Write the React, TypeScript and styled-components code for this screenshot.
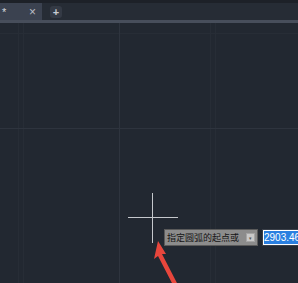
import * as React from "react";
import styled, { createGlobalStyle } from "styled-components";

const GlobalStyle = createGlobalStyle`
  html, body {
    margin: 0;
    padding: 0;
    background: #222831;
    overflow: hidden;
  }
  #root {
    width: 298px;
    height: 283px;
  }
`;

const Page = styled.div`
  display: flex;
  flex-direction: column;
  width: 298px;
  height: 283px;
  background: #222831;
  font-family: "Liberation Sans", "Noto Sans CJK SC", sans-serif;
`;

const TopStrip = styled.div`
  height: 3px;
  background: #1d2128;
`;

const TabBar = styled.div`
  display: flex;
  align-items: stretch;
  height: 17px;
  background: #262c35;
`;

const Tab = styled.div`
  display: flex;
  align-items: center;
  justify-content: space-between;
  width: 42px;
  padding: 0 6px 0 2px;
  box-sizing: border-box;
  background: #3b4250;
  color: #d4d7dc;
  font-size: 11px;
`;

const TabClose = styled.span`
  font-size: 12px;
  color: #b9bdc4;
`;

const AddButton = styled.div`
  display: flex;
  align-items: center;
  justify-content: center;
  width: 12px;
  height: 12px;
  margin: 3px 0 0 8px;
  border-radius: 3px;
  background: #343a45;
  color: #c9ccd2;
  font-size: 11px;
  font-weight: bold;
`;

const Divider = styled.div`
  height: 3px;
  background: #474e5b;
`;

const Canvas = styled.div`
  position: relative;
  flex: 1;
  overflow: hidden;
  background: #222831;
`;

const Drawing = styled.svg`
  position: absolute;
  inset: 0;
`;

const Prompt = styled.div`
  position: absolute;
  left: 164px;
  top: 206px;
  display: flex;
  align-items: center;
  gap: 4px;
`;

const PromptBox = styled.div`
  display: flex;
  align-items: center;
  justify-content: space-between;
  width: 94px;
  height: 17px;
  box-sizing: border-box;
  padding: 0 2px;
  background: #8c8c8c;
  border: 1px solid #5a5a5a;
  color: #141414;
  font-size: 9px;
  white-space: nowrap;
`;

const PromptIcon = styled.span`
  display: flex;
  align-items: flex-end;
  justify-content: center;
  width: 7px;
  height: 7px;
  background: #c9c9c9;
  border: 1px solid #a5a5a5;
  font-size: 5px;
  color: #555;
`;

const ValueBox = styled.div`
  display: flex;
  align-items: center;
  width: 36px;
  height: 17px;
  box-sizing: border-box;
  padding: 1px 0 1px 1px;
  overflow: hidden;
  background: #ffffff;
  border: 1px solid #3a3f48;
  border-right: none;
`;

const Selected = styled.span`
  background: #2a7fe0;
  color: #ffffff;
  font-size: 10px;
  line-height: 13px;
  white-space: nowrap;
`;

export default function App() {
  return (
    <>
      <GlobalStyle />
      <Page>
        <TopStrip />
        <TabBar>
          <Tab>
            <span>*</span>
            <TabClose>×</TabClose>
          </Tab>
          <AddButton>+</AddButton>
        </TabBar>
        <Divider />
        <Canvas>
          <Drawing width="298" height="260" viewBox="0 0 298 260">
            {/* minor grid */}
            <g stroke="#272d36" strokeWidth="1">
              <line x1="18.5" y1="0" x2="18.5" y2="260" />
              <line x1="23.5" y1="0" x2="23.5" y2="260" />
              <line x1="210.5" y1="0" x2="210.5" y2="260" />
              <line x1="215.5" y1="0" x2="215.5" y2="260" />
              <line x1="0" y1="10.5" x2="298" y2="10.5" />
            </g>
            {/* major grid */}
            <g stroke="#2e343e" strokeWidth="1">
              <line x1="119.5" y1="0" x2="119.5" y2="260" />
              <line x1="0" y1="105.5" x2="298" y2="105.5" />
            </g>
            {/* crosshair */}
            <g stroke="#c5c8cc" strokeWidth="1">
              <line x1="152.5" y1="170" x2="152.5" y2="220" />
              <line x1="128" y1="194.5" x2="178" y2="194.5" />
            </g>
            {/* red arrow */}
            <g fill="#e8463c">
              <path d="M158 218 L166 231 L162 231 L178 262 L173 262 L158 233 L154 236 Z" />
            </g>
          </Drawing>
          <Prompt>
            <PromptBox>
              <span>指定圆弧的起点或</span>
              <PromptIcon>▾</PromptIcon>
            </PromptBox>
            <ValueBox>
              <Selected>2903.465</Selected>
            </ValueBox>
          </Prompt>
        </Canvas>
      </Page>
    </>
  );
}
